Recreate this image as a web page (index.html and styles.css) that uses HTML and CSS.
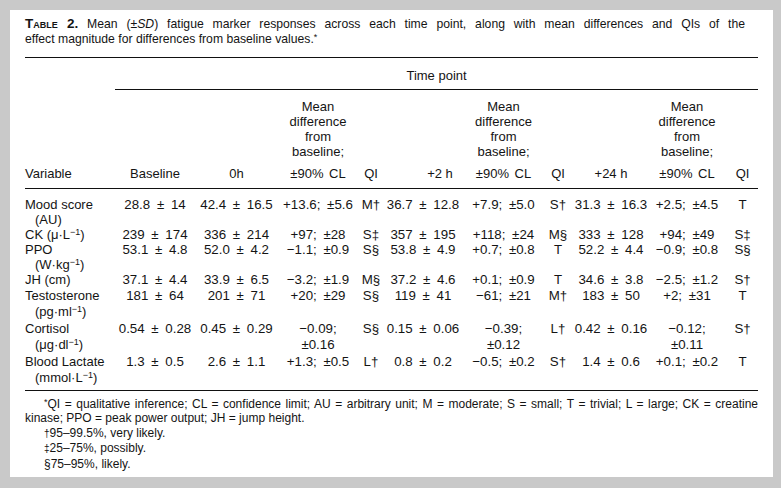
FILE: index.html
```html
<!DOCTYPE html>
<html>
<head>
<meta charset="utf-8">
<link rel="stylesheet" href="styles.css">
</head>
<body>
<div class="panel">
  <p class="caption"><span class="jline"><span class="tlabel">Table 2.</span> Mean (±<i>SD</i>) fatigue marker responses across each time point, along with mean differences and QIs of the</span>effect magnitude for differences from baseline values.<span class="ast">*</span></p>
  <table class="data">
    <colgroup>
      <col class="c-var"><col class="c-base"><col class="c-0h"><col class="c-md1"><col class="c-qi1">
      <col class="c-2h"><col class="c-md2"><col class="c-qi2"><col class="c-24h"><col class="c-md3"><col class="c-qi3">
    </colgroup>
    <thead>
      <tr class="tp-row">
        <th></th>
        <th colspan="10" class="tp">Time point</th>
      </tr>
      <tr class="hd-row">
        <th class="var">Variable</th>
        <th>Baseline</th>
        <th>0h</th>
        <th>Mean<br>difference<br>from<br>baseline;<span class="cl">±90% CL</span></th>
        <th>QI</th>
        <th class="h2">+2 h</th>
        <th>Mean<br>difference<br>from<br>baseline;<span class="cl">±90% CL</span></th>
        <th>QI</th>
        <th>+24 h</th>
        <th>Mean<br>difference<br>from<br>baseline;<span class="cl">±90% CL</span></th>
        <th class="qi3">QI</th>
      </tr>
    </thead>
    <tbody>
      <tr class="r first">
        <td class="var">Mood score<br>(AU)</td>
        <td>28.8 ± 14</td><td>42.4 ± 16.5</td><td>+13.6; ±5.6</td><td>M†</td>
        <td>36.7 ± 12.8</td><td>+7.9; ±5.0</td><td>S†</td>
        <td>31.3 ± 16.3</td><td>+2.5; ±4.5</td><td class="qi3">T</td>
      </tr>
      <tr class="r">
        <td class="var">CK (μ·L<sup>−1</sup>)</td>
        <td>239 ± 174</td><td>336 ± 214</td><td>+97; ±28</td><td>S‡</td>
        <td>357 ± 195</td><td>+118; ±24</td><td>M§</td>
        <td>333 ± 128</td><td>+94; ±49</td><td class="qi3">S‡</td>
      </tr>
      <tr class="r">
        <td class="var">PPO<br>(W·kg<sup>−1</sup>)</td>
        <td>53.1 ± 4.8</td><td>52.0 ± 4.2</td><td>−1.1; ±0.9</td><td>S§</td>
        <td>53.8 ± 4.9</td><td>+0.7; ±0.8</td><td>T</td>
        <td>52.2 ± 4.4</td><td>−0.9; ±0.8</td><td class="qi3">S§</td>
      </tr>
      <tr class="r">
        <td class="var">JH (cm)</td>
        <td>37.1 ± 4.4</td><td>33.9 ± 6.5</td><td>−3.2; ±1.9</td><td>M§</td>
        <td>37.2 ± 4.6</td><td>+0.1; ±0.9</td><td>T</td>
        <td>34.6 ± 3.8</td><td>−2.5; ±1.2</td><td class="qi3">S†</td>
      </tr>
      <tr class="r tall">
        <td class="var">Testosterone<br>(pg·ml<sup>−1</sup>)</td>
        <td>181 ± 64</td><td>201 ± 71</td><td>+20; ±29</td><td>S§</td>
        <td>119 ± 41</td><td>−61; ±21</td><td>M†</td>
        <td>183 ± 50</td><td>+2; ±31</td><td class="qi3">T</td>
      </tr>
      <tr class="r tall">
        <td class="var">Cortisol<br>(μg·dl<sup>−1</sup>)</td>
        <td>0.54 ± 0.28</td><td>0.45 ± 0.29</td><td>−0.09;<br>±0.16</td><td>S§</td>
        <td>0.15 ± 0.06</td><td>−0.39;<br>±0.12</td><td>L†</td>
        <td>0.42 ± 0.16</td><td>−0.12;<br>±0.11</td><td class="qi3">S†</td>
      </tr>
      <tr class="r tall last">
        <td class="var">Blood Lactate<br>(mmol·L<sup>−1</sup>)</td>
        <td>1.3 ± 0.5</td><td>2.6 ± 1.1</td><td>+1.3; ±0.5</td><td>L†</td>
        <td>0.8 ± 0.2</td><td>−0.5; ±0.2</td><td>S†</td>
        <td>1.4 ± 0.6</td><td>+0.1; ±0.2</td><td class="qi3">T</td>
      </tr>
    </tbody>
  </table>
  <div class="notes">
    <p><span class="jline"><span class="ast">*</span>QI = qualitative inference; CL = confidence limit; AU = arbitrary unit; M = moderate; S = small; T = trivial; L = large; CK = creatine</span>kinase; PPO = peak power output; JH = jump height.</p>
    <p class="ind"><span class="dg">†</span>95–99.5%, very likely.</p>
    <p class="ind"><span class="dg">‡</span>25–75%, possibly.</p>
    <p class="ind">§75–95%, likely.</p>
  </div>
</div>
</body>
</html>
```
FILE: styles.css
```css
html, body {
  margin: 0;
  padding: 0;
}
body {
  background: #c9c9c9;
  font-family: "Liberation Sans", Arial, sans-serif;
  color: #141414;
}
.panel {
  margin: 10px 8px 0 10px;
  height: 467px;
  background: #fff;
  padding: 6px 15px 0 15px;
  box-sizing: border-box;
}
.jline {
  display: block;
  text-align: justify;
  text-align-last: justify;
}
.caption {
  margin: 0;
  padding-right: 13px;
  font-size: 12.2px;
  line-height: 15px;
}
.tlabel {
  font-weight: bold;
  font-variant: small-caps;
  font-size: 13.5px;
}
.ast {
  font-size: 9px;
  vertical-align: 3px;
  line-height: 0;
}
.data {
  margin-top: 10px;
  width: 733px;
  table-layout: fixed;
  border-collapse: collapse;
  font-size: 13px;
  border-top: 1px solid #111;
  border-bottom: 1px solid #111;
}
.c-var { width: 90px; }
.c-base { width: 80px; }
.c-0h { width: 83px; }
.c-md1 { width: 80px; }
.c-qi1 { width: 26px; }
.c-2h { width: 78px; }
.c-md2 { width: 83px; }
.c-qi2 { width: 26px; }
.c-24h { width: 80px; }
.c-md3 { width: 72px; }
.c-qi3 { width: 35px; }
.data th {
  font-weight: normal;
  padding: 0;
  text-align: center;
  line-height: 15px;
  white-space: nowrap;
}
.tp-row th {
  padding: 10px 0 6px;
}
.tp-row th.tp {
  border-bottom: 1px solid #111;
}
.hd-row th {
  vertical-align: bottom;
  padding: 9px 0 7px;
  border-bottom: 1px solid #111;
}
.hd-row th.h2 {
  padding-left: 34px;
}
.data .qi3 {
  padding-left: 4px;
}
.cl {
  display: block;
  margin-top: 7px;
  word-spacing: 2px;
}
.data .var {
  text-align: left;
}
.data td {
  padding: 0;
  text-align: center;
  vertical-align: top;
  line-height: 15px;
  white-space: nowrap;
  font-size: 13.3px;
  word-spacing: 3px;
}
.data td.var {
  padding-left: 10px;
  text-indent: -10px;
  white-space: normal;
  word-spacing: 0;
  font-size: 13px;
}
.data td.qi3 {
  padding-left: 4px;
}
.data tr.first td {
  padding-top: 8px;
}
.data tr.tall td {
  line-height: 16px;
  padding-top: 1px;
}
.data tr.last td {
  padding-bottom: 4px;
}
sup {
  font-size: 9px;
  line-height: 0;
  vertical-align: 4px;
}
.notes {
  margin-top: 6px;
  font-size: 12px;
  line-height: 14.4px;
}
.notes p {
  margin: 0;
}
.notes .jline {
  text-indent: 19px;
}
.notes p.ind {
  text-indent: 19px;
}
.dg {
  font-size: 10px;
}
```
